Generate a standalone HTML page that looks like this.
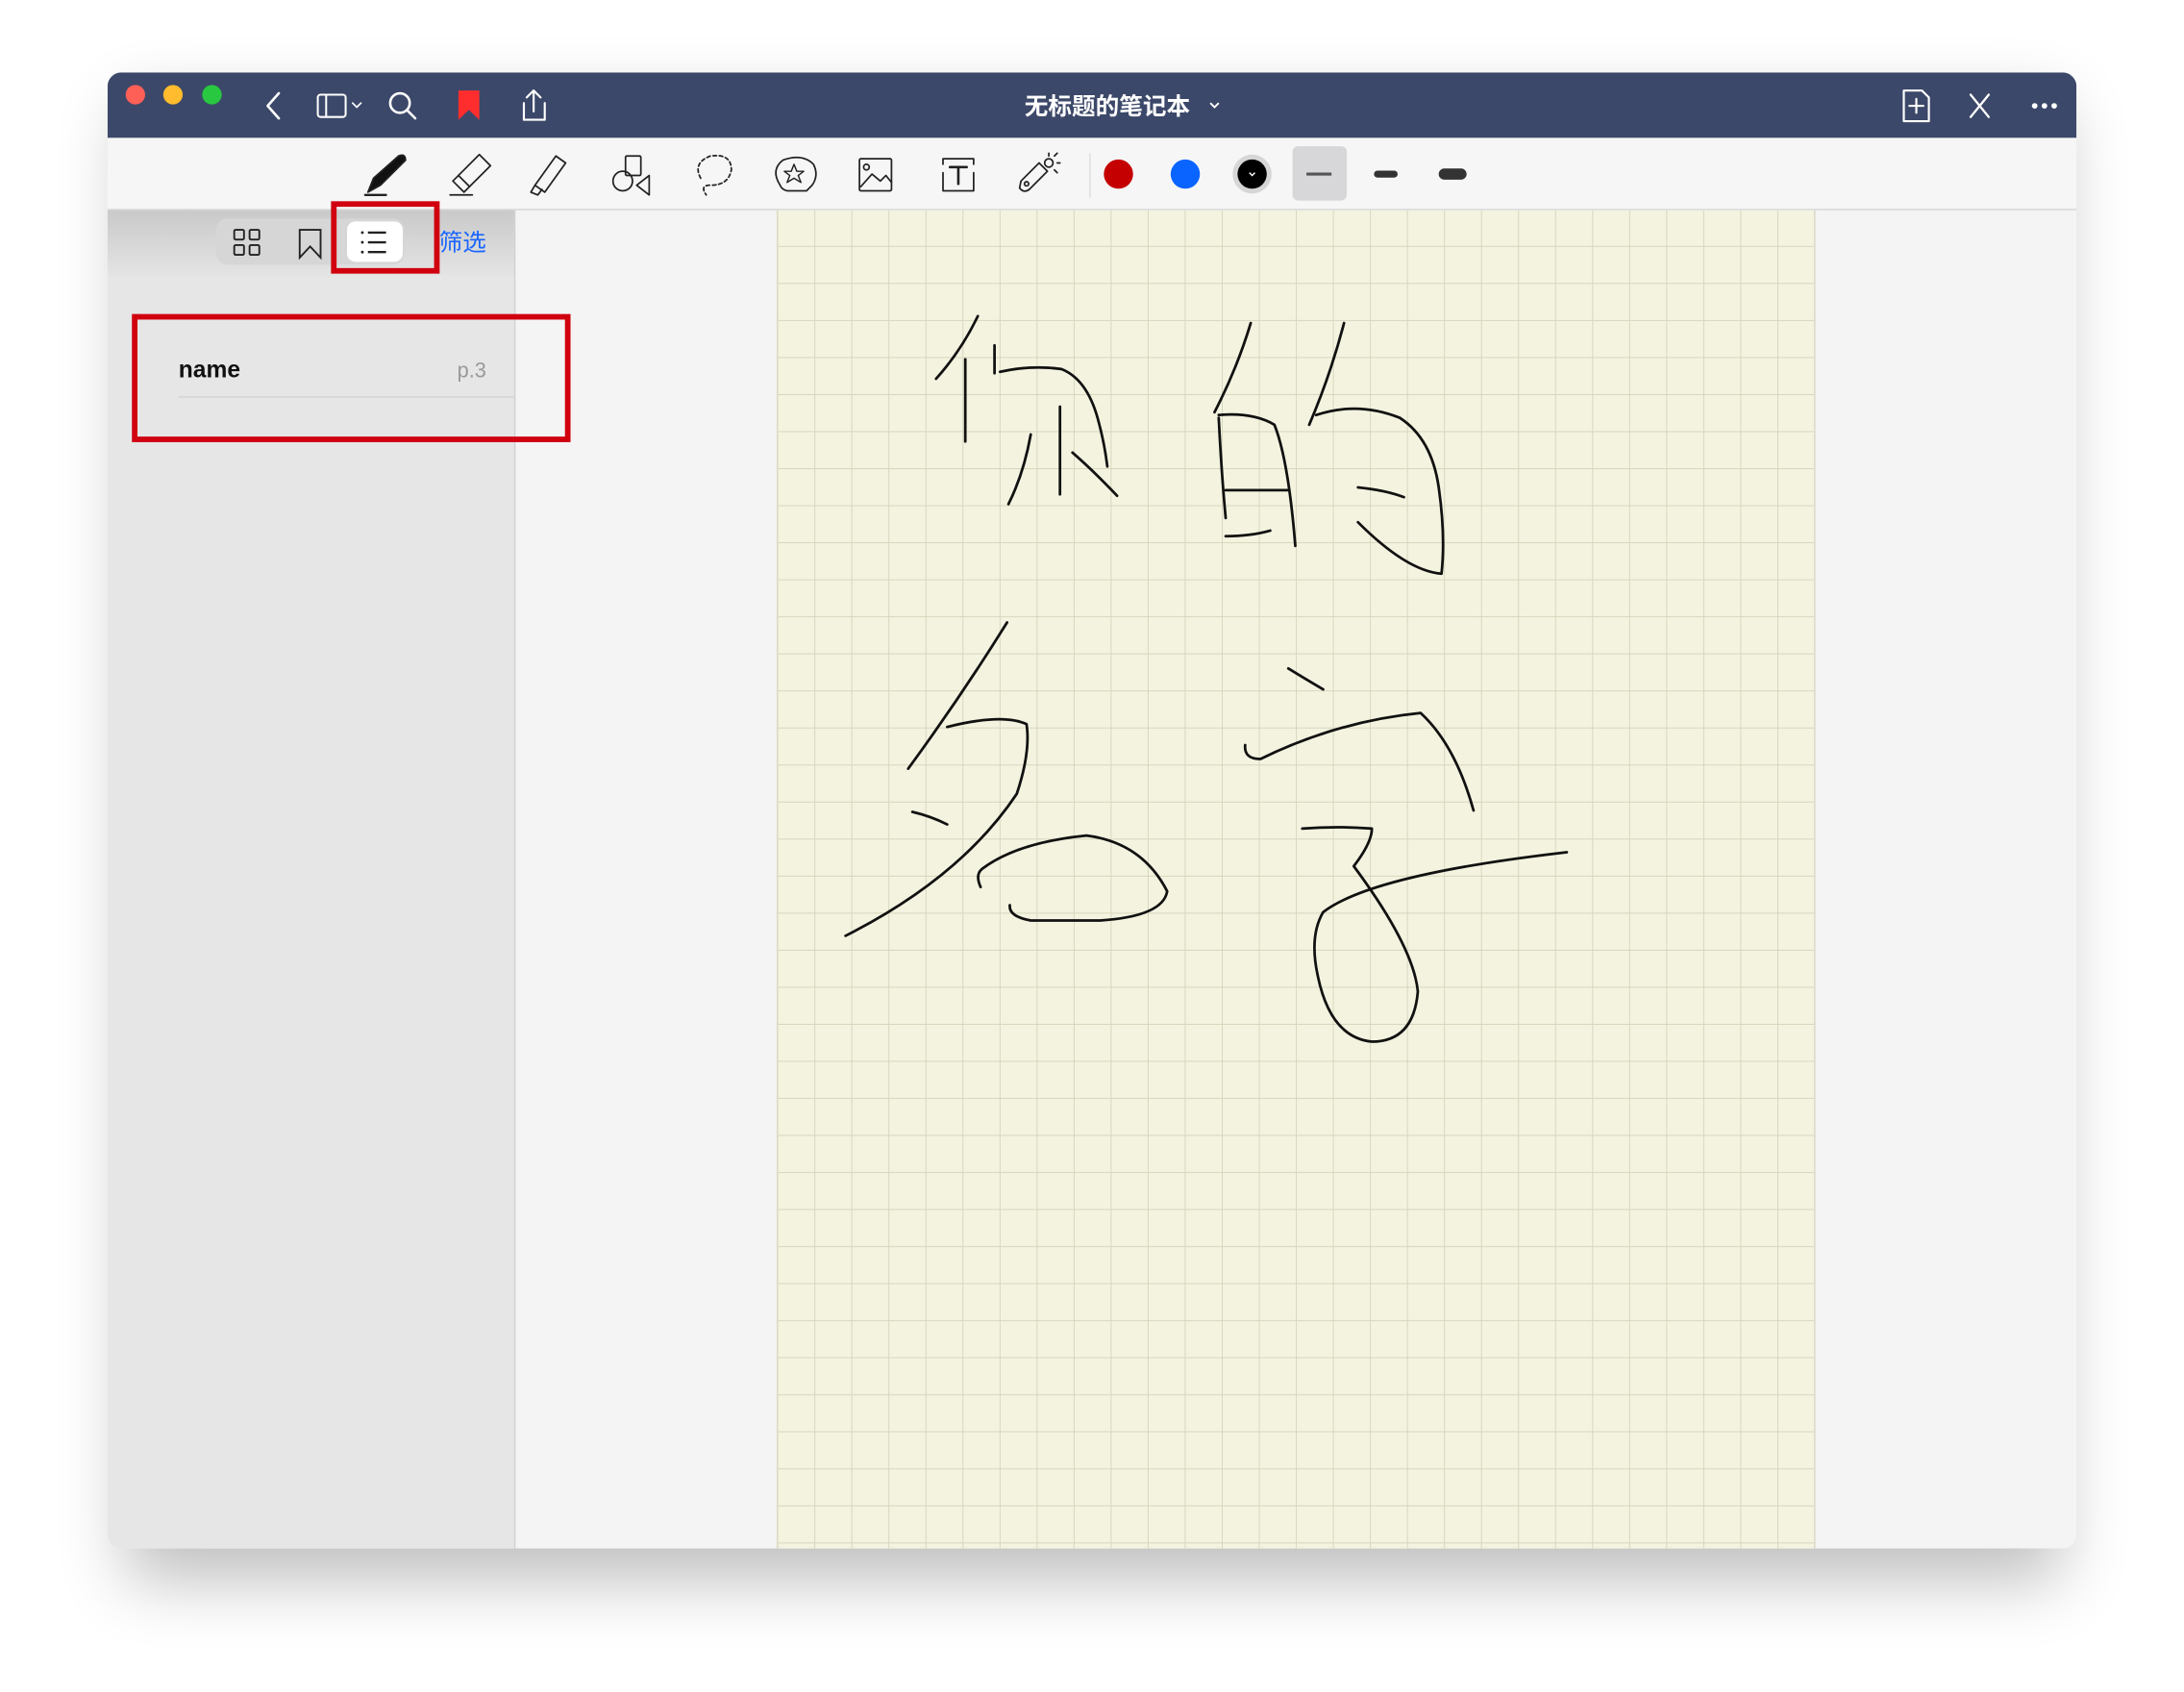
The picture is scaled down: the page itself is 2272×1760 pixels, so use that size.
<!DOCTYPE html>
<html><head><meta charset="utf-8"><style>
html,body{margin:0;padding:0;background:#fff;width:2272px;height:1760px;overflow:hidden}
svg{display:block}
text{font-family:"Liberation Sans","Noto Sans CJK SC",sans-serif}
</style></head><body>
<svg width="2272" height="1760" viewBox="0 0 1568 1215" xmlns="http://www.w3.org/2000/svg">
<defs>
<filter id="sh" x="-10%" y="-10%" width="120%" height="125%"><feGaussianBlur stdDeviation="24"/></filter>
<pattern id="grid" x="558" y="150" width="26.6" height="26.6" patternUnits="userSpaceOnUse">
<rect width="26.6" height="26.6" fill="#f4f3e0"/>
<path d="M0 0H26.6M0 0V26.6" stroke="#d6d6bd" stroke-width="1.3" fill="none"/>
</pattern>
<clipPath id="win"><rect x="77" y="52" width="1414" height="1060" rx="10"/></clipPath>
<linearGradient id="sbh" x1="0" y1="0" x2="0" y2="1"><stop offset="0" stop-color="#c9c9c9"/><stop offset="1" stop-color="#e4e4e4"/></linearGradient>
</defs>
<rect x="90" y="75" width="1390" height="1060" fill="#000" opacity="0.25" filter="url(#sh)"/>
<g clip-path="url(#win)">
<rect x="77" y="52" width="1414" height="1060" fill="#f4f4f4"/>
<rect x="77" y="52" width="1414" height="47" fill="#3c4869"/>
<rect x="77" y="99" width="1414" height="51" fill="#f6f6f6"/>
<line x1="77" y1="150.5" x2="1491" y2="150.5" stroke="#d6d6d6"/>
<rect x="77" y="151" width="292" height="961" fill="#e6e6e6"/>
<rect x="77" y="151" width="292" height="47" fill="url(#sbh)"/>
<line x1="369.5" y1="151" x2="369.5" y2="1112" stroke="#d0d0d0"/>
<rect x="558" y="151" width="745" height="961" fill="url(#grid)"/>
<line x1="558" y1="151" x2="558" y2="1112" stroke="#dcdcc6"/>
<line x1="1303" y1="151" x2="1303" y2="1112" stroke="#d8d8c8"/>
</g>
<circle cx="97" cy="68" r="7" fill="#fe5f57"/>
<circle cx="124" cy="68" r="7" fill="#febc2e"/>
<circle cx="152" cy="68" r="7" fill="#28c840"/>
<g stroke="#fff" fill="none" stroke-width="1.8" stroke-linecap="round" stroke-linejoin="round">
<path d="M200 67L192 76L200 85"/>
<rect x="228" y="68" width="20" height="16" rx="2" stroke-width="1.4"/><path d="M234 68V84" stroke-width="1.4"/>
<path d="M253 74L256 77L259 74" stroke-width="1.2"/>
<circle cx="287" cy="74" r="7"/><path d="M292 79L298 85"/>
<path d="M376 74V86H391V74M383 80V65M378 70L383 65L388 70" stroke-width="1.5"/>
<path d="M1367 65H1380L1385 70V87H1367Z" stroke-width="1.5"/><path d="M1376 71V81M1371 76H1381" stroke-width="1.5"/>
<path d="M1415 68L1428 84M1428 68L1415 84" stroke-width="1.6"/>
</g>
<path d="M329 65H344V86L336.5 79L329 86Z" fill="#ff2d2d"/>
<circle cx="1461" cy="76" r="2" fill="#fff"/><circle cx="1468" cy="76" r="2" fill="#fff"/><circle cx="1475" cy="76" r="2" fill="#fff"/>
<text x="795" y="82" fill="#fff" font-size="17" font-weight="bold" text-anchor="middle">无标题的笔记本</text>
<path d="M869 74L872 77L875 74" stroke="#fff" fill="none" stroke-width="1.3"/>
<g stroke="#222" fill="none" stroke-width="1.2" stroke-linejoin="round" stroke-linecap="round">
<path d="M264 138L268 128L286 112Q291 110 291 115L273 133Z" fill="#111"/><path d="M262 140H277" stroke-width="1.6"/>
<path d="M325 130L344 111L352 119L333 138Z"/><path d="M329 126L337 134M323 140H339"/>
<path d="M384 133L399 112L406 117L391 138ZM384 133L381 138L386 140L389 136"/>
<rect x="449" y="112" width="11" height="14" rx="1"/><circle cx="447" cy="130" r="7"/><path d="M466 126V140L457 133Z"/>
<path d="M503 128Q497 117 510 112Q525 110 525 122Q523 133 510 133Q502 133 507 140" stroke-dasharray="2.5 2"/>
<path d="M560 133Q553 122 562 115Q576 110 584 118Q588 126 583 133L579 137H565Q561 136 560 133Z"/><path d="M570 118L572 123H577L573 126L575 131L570 128L565 131L567 126L563 123H568Z" stroke-width="1"/>
<rect x="617" y="114" width="23" height="23" rx="1"/><circle cx="622" cy="120" r="2"/><path d="M618 134L626 125L632 130L636 126L640 131"/>
<path d="M677 114H699M677 137H699M677 114V118M677 124V137M699 114V118M699 124V137"/><path d="M682 120H694M688 120V132" stroke-width="1.8"/>
<path d="M733 130L746 117L752 123L739 136Q735 139 732 135Z"/><circle cx="737" cy="132" r="1.5"/><circle cx="753" cy="117" r="3"/><path d="M753 110V112M759 117H761M757 112L759 110M757 122L759 124"/>
</g>
<line x1="782.5" y1="110" x2="782.5" y2="142" stroke="#ddd"/>
<circle cx="803" cy="125" r="10.5" fill="#c40000"/>
<circle cx="851" cy="125" r="10.5" fill="#0a64ff"/>
<circle cx="899" cy="125" r="14" fill="#d6d6d6"/><circle cx="899" cy="125" r="10.5" fill="#000"/>
<path d="M897 124L899 126L901 124" stroke="#fff" fill="none" stroke-width="1"/>
<rect x="928" y="105" width="39" height="39" rx="4" fill="#d7d7d9"/>
<path d="M938 125H956" stroke="#555" stroke-width="2.2"/>
<path d="M989 125H1001" stroke="#333" stroke-width="5" stroke-linecap="round"/>
<path d="M1037 125H1049" stroke="#333" stroke-width="8" stroke-linecap="round"/>
<rect x="155" y="157" width="135" height="33" rx="8" fill="#d6d6d6"/>
<rect x="249" y="159" width="40" height="29" rx="6" fill="#fff"/>
<g stroke="#222" fill="none" stroke-width="1.3">
<rect x="168" y="165" width="7" height="7" rx="1"/><rect x="179" y="165" width="7" height="7" rx="1"/><rect x="168" y="176" width="7" height="7" rx="1"/><rect x="179" y="176" width="7" height="7" rx="1"/>
<path d="M215 165H230V185L222.5 177L215 185Z"/>
<path d="M264 167H277M264 174H277M264 181H277" stroke-width="1.6"/>
</g>
<g fill="#222"><circle cx="260" cy="167" r="1"/><circle cx="260" cy="174" r="1"/><circle cx="260" cy="181" r="1"/></g>
<text x="315" y="180" fill="#1a66ff" font-size="17">筛选</text>
<rect x="239.5" y="146.5" width="74" height="48" fill="none" stroke="#d0000f" stroke-width="4"/>
<text x="128" y="271" fill="#111" font-size="17" font-weight="bold">name</text>
<text x="349" y="271" fill="#999" font-size="15" text-anchor="end">p.3</text>
<line x1="128" y1="285" x2="369" y2="285" stroke="#d4d4d4"/>
<rect x="96.5" y="227.5" width="311" height="88" fill="none" stroke="#d0000f" stroke-width="4"/>
<g stroke="#111" fill="none" stroke-width="1.9" stroke-linecap="round" stroke-linejoin="round">
<path d="M702 227Q690 252 672 272"/>
<path d="M693 258V317"/>
<path d="M714 248V268"/>
<path d="M718 267Q740 262 762 265Q780 272 788 300Q793 318 795 335"/>
<path d="M761 292V355"/>
<path d="M740 312Q735 340 724 362"/>
<path d="M770 325Q785 338 802 356"/>
<path d="M898 232Q888 265 872 296"/>
<path d="M875 300Q877 340 880 372"/>
<path d="M875 298Q900 296 915 305Q925 330 930 392"/>
<path d="M880 352H925"/>
<path d="M880 385Q898 385 912 381"/>
<path d="M965 232Q955 270 940 305"/>
<path d="M945 298Q975 288 1005 300Q1028 315 1033 350Q1038 385 1035 412Q1010 410 975 375"/>
<path d="M975 350Q995 352 1008 357"/>
<path d="M723 447Q690 500 652 552"/>
<path d="M680 522Q720 512 737 520Q740 540 730 570Q690 630 607 672"/>
<path d="M655 583Q668 586 680 592"/>
<path d="M704 637Q700 628 705 624Q730 605 780 600Q820 605 838 640Q835 658 790 661L740 661Q724 658 725 650"/>
<path d="M925 480Q938 488 950 495"/>
<path d="M894 535Q893 545 905 545Q960 518 1020 512Q1045 535 1058 582"/>
<path d="M935 595Q960 593 985 595Q985 605 972 622Q1015 680 1018 712Q1015 748 985 748Q955 745 946 700Q940 672 950 655Q985 628 1125 612"/>
</g>
</svg>
</body></html>
